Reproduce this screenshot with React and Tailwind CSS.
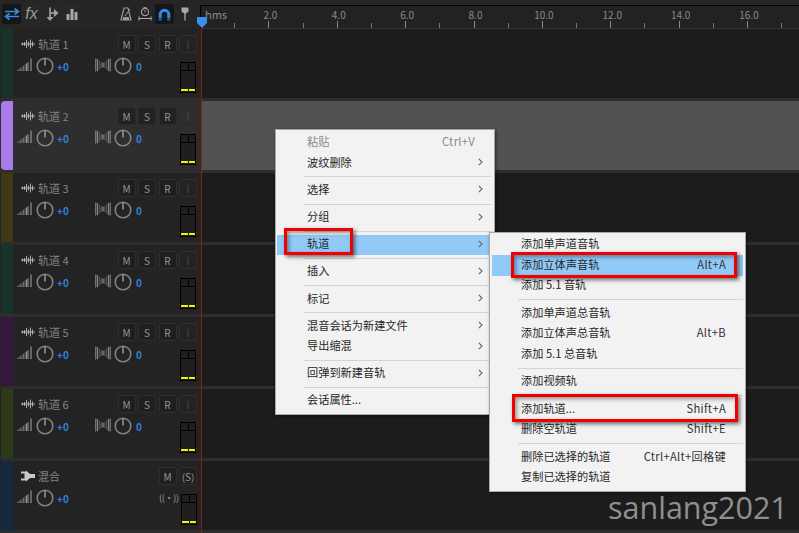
import React from 'react';

const TRACKS = [
  { name: '轨道 1', strip: 'bg-[#17332a]' },
  { name: '轨道 2', strip: 'bg-[#a97be8] rounded-l-[4px]', selected: true },
  { name: '轨道 3', strip: 'bg-[#3f3a15]' },
  { name: '轨道 4', strip: 'bg-[#17332a]' },
  { name: '轨道 5', strip: 'bg-[#33173f]' },
  { name: '轨道 6', strip: 'bg-[#2c3a1a]' },
];

const MAIN_MENU = [
  { label: '粘贴', shortcut: 'Ctrl+V', disabled: true },
  { label: '波纹删除', arrow: true },
  'sep',
  { label: '选择', arrow: true },
  'sep',
  { label: '分组', arrow: true },
  'sep',
  { label: '轨道', arrow: true, active: true },
  'sep',
  { label: '插入', arrow: true },
  'sep',
  { label: '标记', arrow: true },
  'sep',
  { label: '混音会话为新建文件', arrow: true },
  { label: '导出缩混', arrow: true },
  'sep',
  { label: '回弹到新建音轨', arrow: true },
  'sep',
  { label: '会话属性...' },
];

const SUB_MENU = [
  { label: '添加单声道音轨' },
  { label: '添加立体声音轨', shortcut: 'Alt+A', active: true },
  { label: '添加 5.1 音轨' },
  'sep',
  { label: '添加单声道总音轨' },
  { label: '添加立体声总音轨', shortcut: 'Alt+B' },
  { label: '添加 5.1 总音轨' },
  'sep',
  { label: '添加视频轨' },
  'sep',
  { label: '添加轨道...', shortcut: 'Shift+A' },
  { label: '删除空轨道', shortcut: 'Shift+E' },
  'sep',
  { label: '删除已选择的轨道', shortcut: 'Ctrl+Alt+回格键' },
  { label: '复制已选择的轨道' },
];

function Knob() {
  return (
    <svg width="18" height="18" viewBox="0 0 18 18" className="shrink-0">
      <circle cx="9" cy="9" r="7.8" fill="none" stroke="#858585" strokeWidth="1.6" />
      <path d="M9 1.5V8.5" stroke="#999999" strokeWidth="1.5" />
    </svg>
  );
}

function VolumeIcon() {
  return (
    <svg width="15" height="14" viewBox="0 0 15 14" className="shrink-0 mt-[1px]">
      {[0, 1, 2, 3, 4, 5, 6, 7].map((i) => (
        <path
          key={i}
          d={`M${0.5 + i * 1.5} 13V${12 - i * 1.1}`}
          stroke={i > 5 ? '#a8a8a8' : '#777'}
          strokeWidth="0.9"
        />
      ))}
      <path d="M14 13V0.5" stroke="#a8a8a8" strokeWidth="1" />
    </svg>
  );
}

function PanIcon() {
  return (
    <svg width="16" height="14" viewBox="0 0 16 14" className="shrink-0 mt-[1px]">
      <path d="M0.8 0.5V13.5M2.6 1V13" stroke="#8c8c8c" strokeWidth="1.1" />
      <path d="M4.4 2.5V11.5M5.9 3.5V10.5" stroke="#6e6e6e" strokeWidth="0.6" />
      <path d="M7.2 4.5V9.5M8.8 4.5V9.5" stroke="#9a9a9a" strokeWidth="0.8" />
      <path d="M10.1 3.5V10.5M11.6 2.5V11.5" stroke="#6e6e6e" strokeWidth="0.6" />
      <path d="M13.4 1V13M15.2 0.5V13.5" stroke="#8c8c8c" strokeWidth="1.1" />
    </svg>
  );
}

function WaveIcon() {
  return (
    <svg width="14" height="10" viewBox="0 0 14 10" className="shrink-0">
      <path
        d="M0 5H14M1.5 3.5V6.5M3.5 3V7M5.5 1V9M7.5 2.5V7.5M9.5 0.5V9.5M11.5 2.5V7.5"
        stroke="#bdbdbd"
        strokeWidth="0.9"
      />
    </svg>
  );
}

function MixIcon() {
  return (
    <svg width="14" height="12" viewBox="0 0 14 12" className="shrink-0">
      <path d="M0 1.5H5V0.5L9 4H14V8H9L5 11.5V10.5H0V8.5H3.5V3.5H0Z" fill="#c8c8c8" />
    </svg>
  );
}

function Meter() {
  return (
    <div className="w-[16px] h-[31px] mt-[5px] shrink-0 bg-[#1f1f1f] border border-black flex flex-col">
      <div className="h-[8px] flex border-b border-black">
        <div className="flex-1 border-r border-black" />
        <div className="flex-1" />
      </div>
      <div className="mt-auto h-[3px] flex gap-[1px] items-start">
        <div className="flex-1 h-[2px] bg-[#f0f000]" />
        <div className="flex-1 h-[2px] bg-[#f0f000]" />
      </div>
    </div>
  );
}

function TrackButton({ label, selected, dim }) {
  return (
    <div
      className={`w-[18px] h-[18px] flex items-center justify-center rounded-[2px] text-[10px] border ${
        selected ? 'bg-[#222222] border-[#2a2a2a]' : 'bg-[#1f1f1f] border-[#2f2f2f]'
      } ${dim ? 'text-[#4a4a4a] bg-transparent' : 'text-[#959595]'}`}
    >
      {label}
    </div>
  );
}

function TrackRow({ track }) {
  const { name, strip, selected } = track;
  return (
    <div className="h-[69px] mb-[3px] flex shrink-0">
      <div className={`w-[201px] flex pl-[1px] ${selected ? 'bg-[#2e2e2e]' : 'bg-[#232323]'}`}>
        <div className={`w-[12px] shrink-0 ${strip}`} />
        <div className="flex-1 flex flex-col pt-[6px]">
          <div className="flex items-center h-[18px] pr-[4px]">
            <div className="ml-[8px]">
              <WaveIcon />
            </div>
            <span className="ml-[3px] text-[11px] text-[#868686]">{name}</span>
            <div className="ml-auto flex gap-[2.5px]">
              <TrackButton label="M" selected={selected} />
              <TrackButton label="S" selected={selected} />
              <TrackButton label="R" selected={selected} />
              <TrackButton label="I" selected={selected} dim />
            </div>
          </div>
          <div className="flex items-start mt-[4px]">
            <div className="ml-[4px]">
              <VolumeIcon />
            </div>
            <div className="ml-[4px]">
              <Knob />
            </div>
            <span className="ml-[3px] w-[38px] mt-[2px] text-[10px] font-bold text-[#2f82d8]">+0</span>
            <PanIcon />
            <div className="ml-[3px]">
              <Knob />
            </div>
            <span className="ml-[4px] w-[44px] mt-[2px] text-[10px] font-bold text-[#2f82d8]">0</span>
            <Meter />
          </div>
        </div>
      </div>
      <div className={`flex-1 ml-[1px] ${selected ? 'bg-[#525252]' : 'bg-[#1c1c1c]'}`} />
    </div>
  );
}

function MixRow() {
  return (
    <div className="h-[69px] flex shrink-0">
      <div className="w-[201px] flex pl-[1px] bg-[#232323]">
        <div className="w-[12px] shrink-0 bg-[#142a42]" />
        <div className="flex-1 flex flex-col pt-[6px]">
          <div className="flex items-center h-[18px] pr-[4px]">
            <div className="ml-[8px]">
              <MixIcon />
            </div>
            <span className="ml-[3px] text-[11px] text-[#868686]">混合</span>
            <div className="ml-auto flex gap-[2.5px]">
              <TrackButton label="M" />
              <TrackButton label="(S)" />
            </div>
          </div>
          <div className="flex items-start mt-[4px]">
            <div className="ml-[4px]">
              <VolumeIcon />
            </div>
            <div className="ml-[4px]">
              <Knob />
            </div>
            <span className="ml-[3px] w-[102px] mt-[2px] text-[10px] font-bold text-[#2f82d8]">+0</span>
            <span className="w-[22px] mt-[2px] text-[9px] tracking-[-0.3px] whitespace-nowrap text-[#a0a0a0]">((•))</span>
            <Meter />
          </div>
        </div>
      </div>
      <div className="flex-1 ml-[1px] bg-[#1c1c1c]" />
    </div>
  );
}

function Ruler() {
  const cells = Array.from({ length: 17 }, (_, i) => i + 1);
  return (
    <div className="relative flex-1 mt-[5px] flex bg-[#222222] border-t border-l border-t-black border-l-black border-b border-b-[#353535] overflow-hidden">
      <span className="absolute left-[4px] top-0 text-[11px] text-[#8a8a8a]">hms</span>
      {cells.map((n) => (
        <div key={n} className="relative w-[34.2px] shrink-0 flex items-end justify-end">
          <div className={`w-[1px] ${n % 2 === 0 ? 'h-[7px] bg-[#8a8a8a]' : 'h-[5px] bg-[#777777]'}`} />
          {n % 2 === 0 && (
            <span className="absolute right-[-14px] w-[26px] top-[1px] text-center text-[10px] text-[#8a8a8a]">
              {n.toFixed(1)}
            </span>
          )}
        </div>
      ))}
    </div>
  );
}

function ToolCell({ active, children }) {
  return (
    <div
      className={`w-[19px] h-[20px] flex items-center justify-center rounded-[2px] ${
        active ? 'bg-[#161616]' : 'bg-[#272727]'
      }`}
    >
      {children}
    </div>
  );
}

function Toolbar() {
  return (
    <div className="w-[200px] flex items-start pt-[4px] pl-[2px] shrink-0">
      <div className="flex gap-[1px]">
        <ToolCell active>
          <svg width="16" height="14" viewBox="0 0 16 14">
            <path d="M1 4.5H14M10.5 1.5L14.5 4.5L10.5 7.5" fill="none" stroke="#2f8be6" strokeWidth="1.6" />
            <path d="M15 9.5H2M5.5 6.5L1.5 9.5L5.5 12.5" fill="none" stroke="#2f8be6" strokeWidth="1.6" />
          </svg>
        </ToolCell>
        <ToolCell>
          <span className="font-['Liberation_Sans',sans-serif] italic text-[16px] leading-none text-[#9a9a9a]">fx</span>
        </ToolCell>
        <ToolCell>
          <svg width="14" height="15" viewBox="0 0 14 15">
            <path d="M5 0.5V11" stroke="#a0a0a0" strokeWidth="1.6" />
            <path d="M1.5 10H8.5L5 14Z" fill="#a0a0a0" />
            <path d="M5 6H10" stroke="#a0a0a0" strokeWidth="1.6" />
            <path d="M9 2L13.5 6L9 10Z" fill="#a0a0a0" />
          </svg>
        </ToolCell>
        <ToolCell>
          <svg width="12" height="12" viewBox="0 0 12 12">
            <path d="M0.5 6H3.5V12H0.5ZM4.5 1H7.5V12H4.5ZM8.5 4H11.5V12H8.5Z" fill="#a8a8a8" />
          </svg>
        </ToolCell>
      </div>
      <div className="ml-[39px] flex items-center h-[20px]">
        <svg width="12" height="14" viewBox="0 0 12 14">
          <path d="M4 1H8L11 13H1Z" fill="none" stroke="#9a9a9a" strokeWidth="1.2" />
          <path d="M3 10H9V13H3Z" fill="#9a9a9a" />
          <path d="M5 9L10 2" stroke="#9a9a9a" strokeWidth="1" />
        </svg>
        <svg width="14" height="14" viewBox="0 0 14 14" className="ml-[6px]">
          <circle cx="7" cy="5" r="3.6" fill="none" stroke="#9a9a9a" strokeWidth="1.2" />
          <path d="M7 3V5.4M5.5 0.6H8.5" stroke="#9a9a9a" strokeWidth="1" />
          <path d="M1 11.5H13" stroke="#b0b0b0" strokeWidth="1" />
          <path d="M1 9.5V13.5M13 9.5V13.5" stroke="#b0b0b0" strokeWidth="1" />
        </svg>
        <div className="ml-[3px] w-[19px] h-[20px] bg-[#161616] rounded-[2px] flex items-center justify-center">
          <svg width="13" height="13" viewBox="0 0 13 13">
            <path d="M2.2 10V6.5A4.3 4.3 0 0 1 10.8 6.5V10" fill="none" stroke="#2f8be6" strokeWidth="3" />
            <path d="M0.7 10.5H3.7V12.5H0.7ZM9.3 10.5H12.3V12.5H9.3Z" fill="#1f6cb8" />
          </svg>
        </div>
        <svg width="8" height="14" viewBox="0 0 8 14" className="ml-[7px]">
          <path d="M0.5 0.5H7.5V4.5L5 6.5H3L0.5 4.5Z" fill="#a8a8a8" />
          <path d="M4 6V13.5" stroke="#9a9a9a" strokeWidth="1.5" />
        </svg>
      </div>
    </div>
  );
}

function Chevron() {
  return (
    <svg width="5" height="8" viewBox="0 0 5 8" className="shrink-0 mr-[10px]">
      <path d="M0.8 0.8L4 4L0.8 7.2" fill="none" stroke="#666666" strokeWidth="1.1" />
    </svg>
  );
}

function MenuList({ items, pad, sepLeft, itemH, shortcutRight }) {
  return items.map((item, i) =>
    item === 'sep' ? (
      <div key={i} className="h-[7px] flex items-center">
        <div className={`flex-1 h-[1px] bg-[#d4d4d4] ${sepLeft}`} />
      </div>
    ) : (
      <div
        key={i}
        className={`${itemH} flex items-center pb-[2px] ${pad} ${item.active ? 'bg-[#91c9f7]' : ''} ${
          item.disabled ? 'text-[#8a8a8a]' : 'text-[#262626]'
        }`}
      >
        <span>{item.label}</span>
        {item.shortcut && (
          <span
            className={`ml-auto tracking-[0.3px] ${shortcutRight} ${
              item.disabled ? 'text-[#8a8a8a]' : 'text-[#333333]'
            }`}
          >
            {item.shortcut}
          </span>
        )}
        {item.arrow && (
          <span className="ml-auto flex">
            <Chevron />
          </span>
        )}
      </div>
    ),
  );
}

function RedBox({ className }) {
  return (
    <div
      className={`absolute border-[3px] border-[#f20000] shadow-[2px_2px_4px_rgba(0,0,0,0.55),inset_2px_2px_4px_rgba(0,0,0,0.4)] ${className}`}
    />
  );
}

export default function App() {
  return (
    <div className="relative w-[799px] h-[533px] overflow-hidden bg-[#2d2d2d] font-['Noto_Sans_CJK_SC','Noto_Sans',sans-serif]">
      <div className="h-[29px] flex bg-[#252525]">
        <Toolbar />
        <Ruler />
      </div>

      <div className="flex flex-col">
        {TRACKS.map((track) => (
          <TrackRow key={track.name} track={track} />
        ))}
        <MixRow />
      </div>

      {/* playhead */}
      <div className="absolute left-[201px] top-[26px] bottom-0 w-[1px] bg-[#8f1c1c]" />
      <svg width="10" height="11" viewBox="0 0 10 11" className="absolute left-[197px] top-[17px]">
        <path d="M0 0H10V6L5 11L0 6Z" fill="#3a90ea" />
      </svg>

      {/* context menu */}
      <div className="absolute left-[275px] top-[129px] w-[220px] pt-[3px] pb-[3px] px-[1px] bg-[#f2f2f2] border border-[#a8a8a8] shadow-[1px_1px_3px_rgba(0,0,0,0.5)] text-[11.2px] leading-none">
        <MenuList
          items={MAIN_MENU}
          pad="pl-[30px]"
          itemH="h-[20.2px]"
          sepLeft="ml-[27px] mr-[2px]"
          shortcutRight="mr-[18px]"
        />
      </div>

      {/* track submenu */}
      <div className="absolute left-[489px] top-[232px] w-[257px] pt-[1.5px] pb-[3px] px-[2px] bg-[#f2f2f2] border border-[#a8a8a8] shadow-[1px_1px_3px_rgba(0,0,0,0.5)] text-[11.2px] leading-none">
        <MenuList
          items={SUB_MENU}
          pad="pl-[29px]"
          itemH="h-[20.5px]"
          sepLeft="ml-[26px]"
          shortcutRight="mr-[17px]"
        />
      </div>

      <RedBox className="left-[284px] top-[228px] w-[69px] h-[27px]" />
      <RedBox className="left-[511px] top-[252px] w-[226px] h-[26px]" />
      <RedBox className="left-[512px] top-[394px] w-[226px] h-[28px]" />

      <span className="absolute left-[608px] top-[487px] text-[30.5px] leading-[40px] font-['Open_Sans',sans-serif] text-[#8f8f8f]">
        sanlang2021
      </span>
    </div>
  );
}
